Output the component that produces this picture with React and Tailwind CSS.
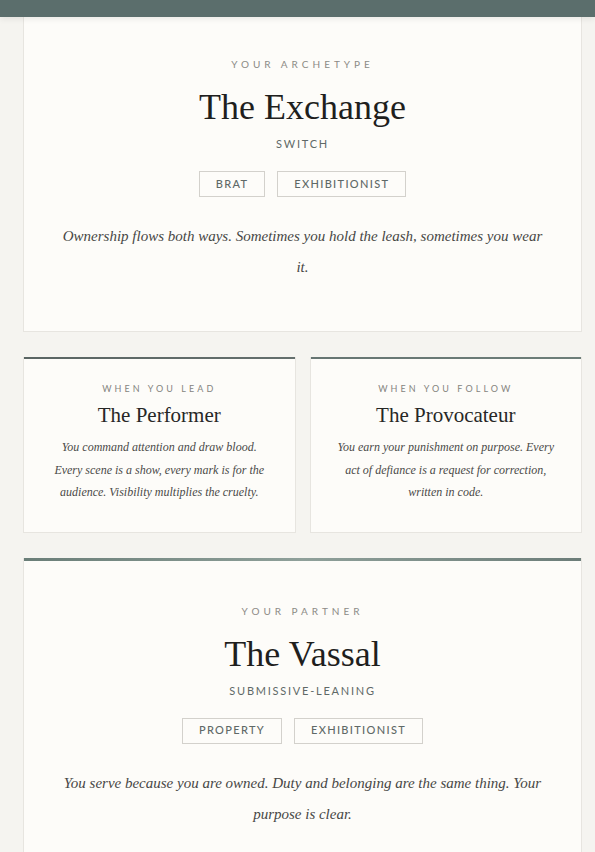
const serif = { fontFamily: '"Liberation Serif", "Times New Roman", serif' };
const sans = { fontFamily: 'Lato, "Open Sans", sans-serif' };

const Tag = ({ children }) => (
  <span
    style={sans}
    className="inline-flex h-[26px] items-center border border-[#d3d1cc] px-4 text-[11px] font-medium uppercase tracking-[0.12em] text-[#5f6967]"
  >
    {children}
  </span>
);

const HeroCard = ({ eyebrow, title, role, tags, text, topBar, className = "" }) => (
  <section className={`bg-[#fdfcf9] border border-[#e7e5e0] border-t-0 text-center ${className}`}>
    {topBar && <div className="h-[3px] bg-gradient-to-r from-[#6a7e78] via-[#8fa09a] to-[#6c7d79]" />}
    <div className={`px-[38px] pb-12 ${topBar ? "pt-[44px]" : "pt-[41px]"}`}>
      <p style={sans} className="text-[10px] leading-[12px] uppercase tracking-[0.4em] text-[#8c8b86]">
        {eyebrow}
      </p>
      <h1 style={serif} className="mt-[16px] text-[36px] leading-[43px] text-[#1f1f1e]">
        {title}
      </h1>
      <p style={sans} className="mt-[8px] text-[11px] leading-[14px] uppercase tracking-[0.16em] text-[#5f6967]">
        {role}
      </p>
      <div className="mt-5 flex justify-center gap-3">
        {tags.map((t) => (
          <Tag key={t}>{t}</Tag>
        ))}
      </div>
      <p style={serif} className="mt-[24px] text-[15px] leading-[31px] italic text-[#474745]">
        {text}
      </p>
    </div>
  </section>
);

const SideCard = ({ eyebrow, title, text, bar }) => (
  <div className="flex-1 bg-[#fdfcf9] border border-[#e7e5e0] border-t-0 text-center">
    <div className={`h-[2px] ${bar}`} />
    <div className="px-6 pt-[24px] pb-[28px]">
      <p style={sans} className="text-[9px] leading-[11px] uppercase tracking-[0.34em] text-[#85847f]">
        {eyebrow}
      </p>
      <h2 style={serif} className="mt-[9px] text-[21px] leading-[25px] text-[#272726]">
        {title}
      </h2>
      <p style={serif} className="mt-[8px] text-[12px] leading-[22.5px] italic text-[#4a4a48]">
        {text}
      </p>
    </div>
  </div>
);

export default function App() {
  return (
    <div className="h-[852px] overflow-hidden bg-[#f5f4f0]">
      <div className="relative z-10 h-[17px] bg-[#5b6e6c] shadow-[0_2px_6px_rgba(0,0,0,0.08)]" />
      <main className="pl-[23px] pr-[13px] pb-10">
        <HeroCard
          eyebrow="Your Archetype"
          title="The Exchange"
          role="Switch"
          tags={["Brat", "Exhibitionist"]}
          text="Ownership flows both ways. Sometimes you hold the leash, sometimes you wear it."
        />

        <div className="mt-[25px] flex gap-[14px]">
          <SideCard
            bar="bg-gradient-to-r from-[#5a6563] to-[#646f6d]"
            eyebrow="When you lead"
            title="The Performer"
            text="You command attention and draw blood. Every scene is a show, every mark is for the audience. Visibility multiplies the cruelty."
          />
          <SideCard
            bar="bg-gradient-to-r from-[#667572] to-[#6d7e79]"
            eyebrow="When you follow"
            title="The Provocateur"
            text="You earn your punishment on purpose. Every act of defiance is a request for correction, written in code."
          />
        </div>

        <HeroCard
          className="mt-[25px]"
          topBar
          eyebrow="Your Partner"
          title="The Vassal"
          role="Submissive-Leaning"
          tags={["Property", "Exhibitionist"]}
          text="You serve because you are owned. Duty and belonging are the same thing. Your purpose is clear."
        />
      </main>
    </div>
  );
}
